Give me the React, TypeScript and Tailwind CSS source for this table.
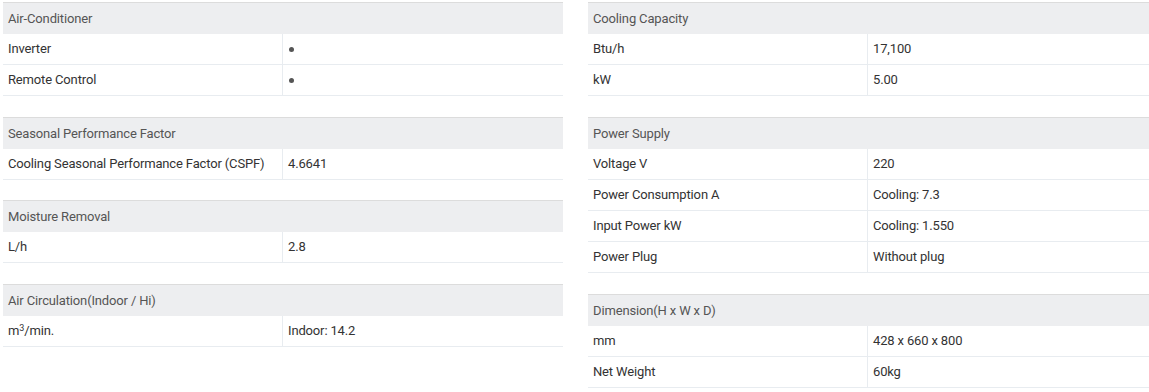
type Row = [string | React.ReactNode, React.ReactNode];

interface SpecTableProps {
  title: string;
  rows: Row[];
  className?: string;
}

function SpecTable({ title, rows, className = 'mt-[21px]' }: SpecTableProps) {
  return (
    <div className={className}>
      <div className="h-[32px] border-t border-[#dcdcdc] bg-[#edeef0] px-[5px] flex items-center text-[#555]">
        {title}
      </div>
      {rows.map(([label, value], i) => (
        <div key={i} className="grid grid-cols-[280px_1fr] h-[31px] border-b border-[#e8ecf0]">
          <div className="px-[5px] flex items-center border-r border-[#e8ecf0]">{label}</div>
          <div className="px-[5px] flex items-center">{value}</div>
        </div>
      ))}
    </div>
  );
}

const Dot = () => <span className="inline-block w-[5px] h-[5px] rounded-full bg-[#555] ml-[1px]" />;

export default function App() {
  return (
    <div
      className="w-[1149px] h-[392px] bg-white pt-[2px] pl-[3px] flex gap-[25px] text-[13px] tracking-[-0.15px] text-[#333]"
      style={{ fontFamily: 'Roboto, "Liberation Sans", sans-serif' }}
    >
      <div className="w-[560px]">
        <SpecTable
          className=""
          title="Air-Conditioner"
          rows={[
            ['Inverter', <Dot />],
            ['Remote Control', <Dot />],
          ]}
        />
        <SpecTable
          title="Seasonal Performance Factor"
          rows={[['Cooling Seasonal Performance Factor (CSPF)', '4.6641']]}
        />
        <SpecTable className="mt-[20px]" title="Moisture Removal" rows={[['L/h', '2.8']]} />
        <SpecTable
          title="Air Circulation(Indoor / Hi)"
          rows={[[<span>m<sup className="text-[9px]">3</sup>/min.</span>, 'Indoor: 14.2']]}
        />
      </div>
      <div className="flex-1">
        <SpecTable
          className=""
          title="Cooling Capacity"
          rows={[
            ['Btu/h', '17,100'],
            ['kW', '5.00'],
          ]}
        />
        <SpecTable
          title="Power Supply"
          rows={[
            ['Voltage V', '220'],
            ['Power Consumption A', 'Cooling: 7.3'],
            ['Input Power kW', 'Cooling: 1.550'],
            ['Power Plug', 'Without plug'],
          ]}
        />
        <SpecTable
          title="Dimension(H x W x D)"
          rows={[
            ['mm', '428 x 660 x 800'],
            ['Net Weight', '60kg'],
          ]}
        />
      </div>
    </div>
  );
}
